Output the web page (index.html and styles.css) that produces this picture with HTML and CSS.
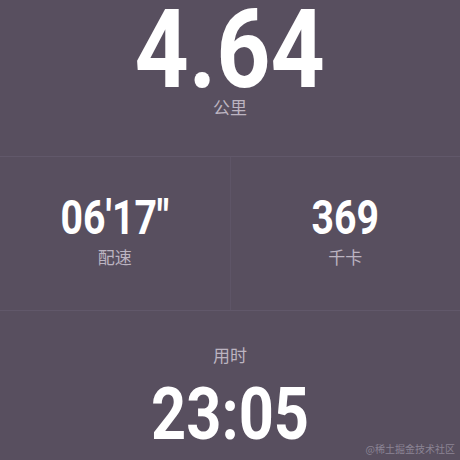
FILE: index.html
```html
<!DOCTYPE html>
<html>
<head>
<meta charset="utf-8">
<link rel="stylesheet" href="styles.css">
</head>
<body>
<div class="screen">
  <section class="top">
    <div class="big">4.64</div>
    <div class="label">公里</div>
  </section>
  <section class="row">
    <div class="cell">
      <div class="mid">06'17"</div>
      <div class="label">配速</div>
    </div>
    <div class="cell">
      <div class="mid">369</div>
      <div class="label">千卡</div>
    </div>
  </section>
  <section class="bottom">
    <div class="label">用时</div>
    <div class="time">23:05</div>
  </section>
  <div class="mark">@稀土掘金技术社区</div>
</div>
</body>
</html>
```
FILE: styles.css
```css
html, body {
  margin: 0;
  padding: 0;
  background: #584f5f;
}
.screen {
  position: relative;
  width: 460px;
  height: 460px;
  overflow: hidden;
  background: #584f5f;
  font-family: "Noto Sans CJK SC", sans-serif;
  color: #fff;
}
.top {
  height: 156px;
  border-bottom: 1px solid #61586a;
  display: flex;
  flex-direction: column;
  align-items: center;
}
.big {
  font-family: Roboto, sans-serif;
  font-weight: bold;
  font-size: 110px;
  line-height: 92px;
  margin-top: 4px;
  transform: scaleX(0.86);
  white-space: nowrap;
}
.label {
  font-size: 17px;
  line-height: 20px;
  color: #bcb4c1;
}
.top .label {
  margin-top: 1px;
}
.row {
  display: flex;
  height: 153px;
  border-bottom: 1px solid #61586a;
}
.cell {
  flex: 1;
  display: flex;
  flex-direction: column;
  align-items: center;
  padding-top: 39px;
}
.cell + .cell {
  border-left: 1px solid #5e5567;
}
.mid {
  font-family: Roboto, sans-serif;
  font-weight: bold;
  font-size: 49px;
  line-height: 44px;
  transform: scaleX(0.8);
  white-space: nowrap;
}
.cell .label {
  margin-top: 7px;
}
.bottom {
  display: flex;
  flex-direction: column;
  align-items: center;
  padding-top: 34px;
}
.time {
  font-family: Roboto, sans-serif;
  font-weight: bold;
  font-size: 73px;
  line-height: 73px;
  margin-top: 13px;
  transform: scaleX(0.84);
  white-space: nowrap;
}
.mark {
  position: absolute;
  right: 5px;
  bottom: 5px;
  font-size: 10px;
  line-height: 12px;
  color: #8b8494;
}
```
